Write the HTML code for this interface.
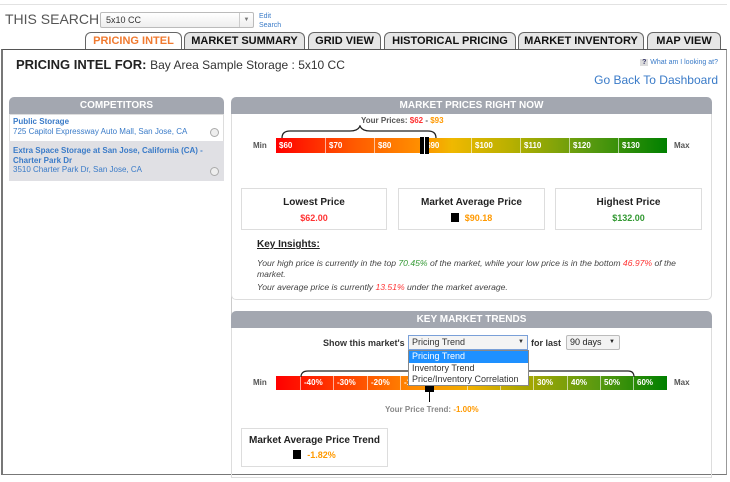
<!DOCTYPE html>
<html><head><meta charset="utf-8"><style>
*{margin:0;padding:0;box-sizing:border-box}
body{width:730px;height:482px;overflow:hidden;background:#fff;font-family:"Liberation Sans",Arial,sans-serif;position:relative;color:#222}
.a{position:absolute;white-space:nowrap}
.tab{position:absolute;top:32px;height:18px;border:1px solid #666;border-bottom:none;border-radius:6px 6px 0 0;background:#e6e6e6;font-weight:bold;font-size:11px;text-align:center;line-height:17px;color:#111;white-space:nowrap}
.hdr{position:absolute;height:17px;background:#a3a7b0;color:#fff;font-weight:bold;font-size:10px;text-align:center;line-height:17px;border-radius:5px 5px 0 0}
.seg{position:absolute;top:0;height:100%;border-left:1px solid rgba(255,255,255,.6);color:#fff;font-weight:bold;font-size:8px;padding-left:3px;line-height:15px}
.box{position:absolute;border:1px solid #ddd;text-align:center;font-weight:bold;font-size:10px}
.blue{color:#3a7bc8}
</style></head><body>
<div class="a" style="left:0;top:4px;width:727px;border-top:1px solid #e2e2e2"></div>
<div class="a" style="left:5px;top:11px;font-size:14px;color:#555">THIS SEARCH</div>
<div class="a" style="left:100px;top:12px;width:154px;height:16px;border:1px solid #bbb;border-radius:2px;background:linear-gradient(#fff,#eee);font-size:9px;line-height:14px;padding-left:5px;color:#333">5x10 CC<span class="a" style="right:0;top:0;width:14px;height:14px;border-left:1px solid #ccc;font-size:6px;text-align:center;color:#777">▼</span></div>
<div class="a blue" style="left:259px;top:12px;font-size:7px;line-height:9px">Edit<br>Search</div>
<div class="tab" style="left:85px;width:97px;background:#fff;color:#f07a30">PRICING INTEL</div>
<div class="tab" style="left:184px;width:121px">MARKET SUMMARY</div>
<div class="tab" style="left:308px;width:73px">GRID VIEW</div>
<div class="tab" style="left:384px;width:132px">HISTORICAL PRICING</div>
<div class="tab" style="left:518px;width:126px">MARKET INVENTORY</div>
<div class="tab" style="left:647px;width:74px">MAP VIEW</div>
<div class="a" style="left:1px;top:49px;width:726px;height:426px;border:1px solid #777;border-top:1px solid #555;border-left:2px solid #777;border-right:1px solid #999"></div>
<div class="a" style="left:182px;top:49px;width:539px;border-top:1px solid #555"></div>
<div class="a" style="left:16px;top:57px;font-size:13px"><b>PRICING INTEL FOR:</b> <span style="font-size:12px;color:#333">Bay Area Sample Storage : 5x10 CC</span></div>
<div class="a blue" style="right:12px;top:59px;font-size:7px"><span style="background:#ddd;color:#336;font-weight:bold;padding:0 2px">?</span> What am I looking at?</div>
<div class="a blue" style="right:12px;top:73px;font-size:12px">Go Back To Dashboard</div>

<div class="hdr" style="left:9px;top:97px;width:215px">COMPETITORS</div>
<div class="a" style="left:9px;top:114px;width:215px;height:67px;border:1px solid #ddd;background:#fff"></div>
<div class="a" style="left:9px;top:141px;width:215px;height:40px;background:#e0e0e4"></div>
<div class="a blue" style="left:13px;top:117px;font-size:8px;line-height:10px"><b>Public Storage</b><br>725 Capitol Expressway Auto Mall, San Jose, CA</div>
<div class="a blue" style="left:13px;top:146px;font-size:8px;line-height:9.5px;width:205px;white-space:normal"><b>Extra Space Storage at San Jose, California (CA) - Charter Park Dr</b><br>3510 Charter Park Dr, San Jose, CA</div>
<div class="a" style="left:210px;top:128px;width:9px;height:9px;border-radius:50%;border:1px solid #aaa;background:#eee"></div>
<div class="a" style="left:210px;top:167px;width:9px;height:9px;border-radius:50%;border:1px solid #aaa;background:#eee"></div>
<div class="a" style="left:231px;top:181px;height:294px;border-left:1px solid #ccc"></div>

<div class="hdr" style="left:231px;top:97px;width:481px">MARKET PRICES RIGHT NOW</div>
<div class="a" style="left:231px;top:114px;width:481px;height:186px;border:1px solid #ddd;border-top:none;border-radius:0 0 5px 5px"></div>
<div class="a" style="left:361px;top:116px;font-size:8px;font-weight:bold;color:#555">Your Prices: <span style="color:#f33">$62</span> - <span style="color:#f90">$93</span></div>
<svg class="a" style="left:280px;top:125px" width="160" height="14"><path d="M2 13 Q2 6 10 6 L70 6 Q78 6 80 1 Q82 6 90 6 L148 6 Q156 6 156 13" fill="none" stroke="#222" stroke-width="1.3"/></svg>
<div class="a" style="left:253px;top:141px;font-size:8px;font-weight:bold;color:#555">Min</div>
<div class="a" style="left:674px;top:141px;font-size:8px;font-weight:bold;color:#555">Max</div>
<div class="a" style="left:276px;top:138px;width:391px;height:15px;background:linear-gradient(90deg,#f00 0%,#ff5a00 20%,#ff9000 37%,#f0b800 45%,#b8b000 60%,#5a9a10 80%,#008000 100%)">
<div class="seg" style="left:0;border:none">$60</div><div class="seg" style="left:49px">$70</div><div class="seg" style="left:98px">$80</div><div class="seg" style="left:146px">$90</div><div class="seg" style="left:195px">$100</div><div class="seg" style="left:244px">$110</div><div class="seg" style="left:293px">$120</div><div class="seg" style="left:342px">$130</div>
<div class="a" style="left:144px;top:-1px;width:9px;height:17px;background:#000;border-left:2px solid #000;"><div style="margin-left:2px;width:1px;height:100%;background:#fff"></div></div>
</div>
<div class="box" style="left:241px;top:188px;width:146px;height:42px;padding-top:8px">Lowest Price<div style="color:#f33;font-size:9px;margin-top:5px">$62.00</div></div>
<div class="box" style="left:398px;top:188px;width:147px;height:42px;padding-top:8px">Market Average Price<div style="color:#f90;font-size:9px;margin-top:5px"><span style="display:inline-block;width:8px;height:9px;background:#000;vertical-align:-1px;margin-right:6px"></span>$90.18</div></div>
<div class="box" style="left:555px;top:188px;width:147px;height:42px;padding-top:8px">Highest Price<div style="color:#393;font-size:9px;margin-top:5px">$132.00</div></div>
<div class="a" style="left:257px;top:239px;font-size:10px;font-weight:bold;text-decoration:underline">Key Insights:</div>
<div class="a" style="left:257px;top:258px;width:430px;white-space:normal;font-size:8.6px;font-style:italic;color:#444;line-height:11px">Your high price is currently in the top <span style="color:#393">70.45%</span> of the market, while your low price is in the bottom <span style="color:#f33">46.97%</span> of the market.</div>
<div class="a" style="left:257px;top:282px;font-size:8.6px;font-style:italic;color:#444">Your average price is currently <span style="color:#f33">13.51%</span> under the market average.</div>

<div class="hdr" style="left:231px;top:311px;width:481px">KEY MARKET TRENDS</div>
<div class="a" style="left:231px;top:328px;width:481px;height:150px;border:1px solid #ddd;border-top:none"></div>
<div class="a" style="left:323px;top:338px;font-size:9px;font-weight:bold;color:#333">Show this market's</div>
<div class="a" style="left:408px;top:335px;width:120px;height:15px;border:1px solid #7aa0d8;font-size:9px;line-height:13px;padding-left:3px;color:#333;background:#f4f4f4">Pricing Trend<span style="position:absolute;right:3px;font-size:6px">▼</span></div>
<div class="a" style="left:531px;top:338px;font-size:9px;font-weight:bold;color:#333">for last</div>
<div class="a" style="left:566px;top:335px;width:54px;height:15px;border:1px solid #bbb;border-radius:2px;font-size:9px;line-height:13px;padding-left:3px;background:#f2f2f2">90 days<span style="position:absolute;right:4px;font-size:6px">▼</span></div>
<div class="a" style="left:276px;top:376px;width:391px;height:14px;background:linear-gradient(90deg,#f00 0%,#ff4a00 20%,#ff8a00 35%,#f0b000 50%,#b0a800 62%,#5a9a10 82%,#008000 100%)">
<div class="seg" style="left:24px;line-height:14px">-40%</div><div class="seg" style="left:57px;line-height:14px">-30%</div><div class="seg" style="left:91px;line-height:14px">-20%</div><div class="seg" style="left:124px;line-height:14px">-10%</div><div class="seg" style="left:157px"></div><div class="seg" style="left:191px"></div><div class="seg" style="left:224px"></div><div class="seg" style="left:257px;line-height:14px">30%</div><div class="seg" style="left:291px;line-height:14px">40%</div><div class="seg" style="left:324px;line-height:14px">50%</div><div class="seg" style="left:357px;line-height:14px">60%</div>
</div>
<svg class="a" style="left:300px;top:368px" width="336" height="10"><path d="M1 9 Q1 3 8 3 L328 3 Q334 3 334 9" fill="none" stroke="#222" stroke-width="1.2"/></svg>
<div class="a" style="left:253px;top:378px;font-size:8px;font-weight:bold;color:#555">Min</div>
<div class="a" style="left:674px;top:378px;font-size:8px;font-weight:bold;color:#555">Max</div>
<div class="a" style="left:425px;top:385px;width:9px;height:7px;background:#000"></div>
<div class="a" style="left:429px;top:390px;width:1px;height:12px;background:#000"></div>
<div class="a" style="left:385px;top:405px;font-size:8px;font-weight:bold;color:#888">Your Price Trend: <span style="color:#f90">-1.00%</span></div>
<div class="a" style="left:408px;top:350px;width:121px;height:36px;border:1px solid #888;background:#fff;font-size:9px;line-height:11.5px;color:#333">
<div style="background:#1e90ff;color:#fff;padding-left:3px">Pricing Trend</div><div style="padding-left:3px">Inventory Trend</div><div style="padding-left:3px">Price/Inventory Correlation</div></div>
<div class="box" style="left:241px;top:428px;width:147px;height:39px;padding-top:6px">Market Average Price Trend<div style="color:#f90;font-size:9px;margin-top:4px"><span style="display:inline-block;width:8px;height:9px;background:#000;vertical-align:-1px;margin-right:6px"></span>-1.82%</div></div>
</body></html>
